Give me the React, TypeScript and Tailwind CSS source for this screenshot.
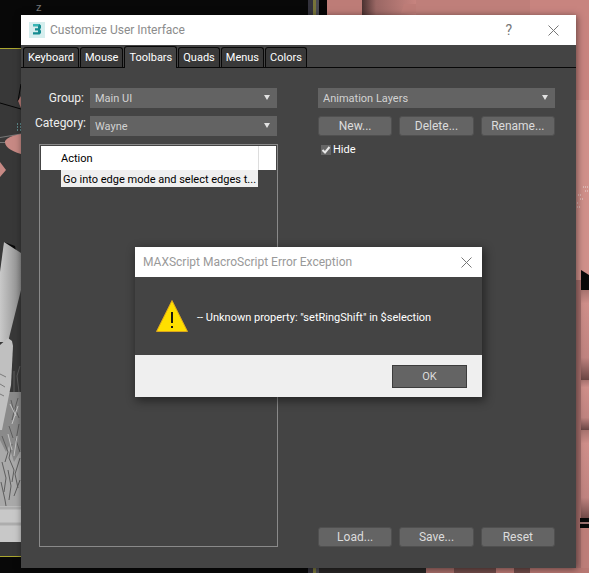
import type { ButtonHTMLAttributes } from "react";
import { useState } from "react";

const TABS = ["Keyboard", "Mouse", "Toolbars", "Quads", "Menus", "Colors"];

function Viewport() {
  return (
    <svg
      className="absolute inset-0 h-full w-full"
      viewBox="0 0 589 573"
      preserveAspectRatio="none"
      aria-hidden="true"
    >
      <defs>
        <linearGradient id="limb" x1="0" x2="1">
          <stop offset="0" stopColor="#c9c9c9" />
          <stop offset="1" stopColor="#8b8b8b" />
        </linearGradient>
        <linearGradient id="skinTop" x1="0" x2="1">
          <stop offset="0" stopColor="#4a3130" />
          <stop offset="0.25" stopColor="#9a6764" />
          <stop offset="1" stopColor="#c98580" />
        </linearGradient>
        <linearGradient id="skinFold" x1="0" y1="0" x2="0" y2="1">
          <stop offset="0" stopColor="#a8736f" />
          <stop offset="0.15" stopColor="#cf8f8a" />
          <stop offset="0.75" stopColor="#c08480" />
          <stop offset="1" stopColor="#6b4644" />
        </linearGradient>
      </defs>
      <rect width="589" height="573" fill="#080808" />

      {/* left viewport */}
      <rect y="49" width="308" height="508" fill="#383838" />
      <path d="M0 48.5H308M0 556.5H308" stroke="#aaa62f" />
      <path d="M0 103L21 109M21 84L18 101L21 105" stroke="#050505" fill="none" />
      <path d="M18 101L21 96V108Z" fill="#b67a76" />
      <path d="M17 124h1M20 124h1M17 127h1M20 127h1M17 130h1M20 130h1" stroke="#7fd4d8" />
      <path d="M0 137.5L21 134M0 142.5H6" stroke="#777" />
      <path d="M21 134Q8 136 5 141Q4 149 21 154Z" fill="#c78984" />
      <path d="M0 162L6 170L0 177Z" fill="#c78984" />
      <path d="M4 242L15 246L16 251L21 254V260L4 248Z" fill="#080808" />
      <path d="M4 242L21 253V290L8 342H0V272Z" fill="url(#limb)" />
      <path d="M0 392H21V508H0Z" fill="#8a8a8a" />
      <path d="M0 440L6 452L9 446L14 462L21 450V508H0Z" fill="#a9a9a9" />
      <path
        d="M14 392V371M19 392L17 376L20 366M11 400L14 412L12 420M18 398L15 408L19 418M9 426L13 438M19 424L16 440L20 452M2 436L8 452L5 462M12 444L9 458L14 470L12 482M20 458L15 474L18 488M2 462L6 478L4 492M8 470L11 486L9 500M1 482L5 500L6 506M20 480L14 496"
        stroke="#5e5e5e"
        fill="none"
      />
      <path d="M10 404L16 416M18 406L12 424M8 434L12 450M17 436L14 456" stroke="#c4c4c4" fill="none" />
      <path d="M0 345L8 338L12 341L13 346L11 385L2 430H0Z" fill="#c0c0c0" />
      <path d="M0 374l6 3M0 384l5 3M0 394l4 2" stroke="#7b7b7b" />
      <rect y="506" width="21" height="36" fill="#c8c8c8" />
      <path d="M0 508H21M0 524H21" stroke="#adadad" strokeWidth="3" />

      {/* right viewport */}
      <rect x="308" width="5" height="573" fill="#33323c" />
      <path d="M314.5 0V573" stroke="#77743a" strokeWidth="3" />
      <rect x="316" width="3" height="573" fill="#4a4a52" />
      <path d="M319 3L321 0H328V15H319Z" fill="#050505" />
      <rect x="327" width="35" height="15" fill="#bd7c77" />
      <rect x="362" width="56" height="15" fill="url(#skinTop)" />
      <path d="M401 13L404 4H416V13Z" fill="#bd7c77" />
      <rect x="416" width="173" height="15" fill="#bf7f7a" />
      <rect x="530" width="59" height="100" fill="#c8847f" />
      <rect x="576" y="100" width="13" height="180" fill="#d0908a" />
      <path d="M577 203h2M580 199h3M578 195h4M585 191h4M583 187h6M577 207h4" stroke="#ead9d7" strokeDasharray="1 1" />
      <path d="M581 270L589 275V287L581 283Z" fill="#080808" />
      <rect x="581" y="290" width="8" height="90" fill="url(#skinFold)" />
      <rect x="581" y="380" width="8" height="50" fill="url(#skinFold)" />
      <rect x="581" y="430" width="8" height="90" fill="url(#skinFold)" />
      <rect x="576" y="280" width="5" height="293" fill="#a66f6c" />
      <rect x="580" y="518" width="9" height="10" fill="#080808" />
      <path d="M580 523H589" stroke="#9c7371" strokeWidth="2" />
      <rect x="581" y="528" width="8" height="45" fill="#bd7e79" />
      <rect x="319" y="568" width="107" height="5" fill="#282625" />
      <rect x="426" y="568" width="28" height="5" fill="#a66d69" />
      <rect x="454" y="568" width="42" height="5" fill="#704b49" />
      <rect x="496" y="568" width="18" height="5" fill="#b87873" />
      <rect x="514" y="568" width="16" height="5" fill="#704b49" />
      <rect x="530" y="568" width="59" height="5" fill="#b87873" />
    </svg>
  );
}

function CloseIcon() {
  return (
    <svg className="h-[11px] w-[11px]" viewBox="0 0 11 11" aria-hidden="true">
      <path d="M0.5 0.5L10.5 10.5M10.5 0.5L0.5 10.5" stroke="#777" fill="none" />
    </svg>
  );
}

function Dropdown({ id, value, label }: { id: string; value: string; label?: string }) {
  return (
    <div className="relative h-5 w-full">
      <select
        id={id}
        aria-label={label}
        className="block h-5 w-full appearance-none bg-[#636363] pl-[5px] pr-6 pt-0.5 text-[#d2d2d2] outline-none"
      >
        <option>{value}</option>
      </select>
      <svg className="pointer-events-none absolute right-[7px] top-[7px] h-[5px] w-[6px]" viewBox="0 0 6 5" aria-hidden="true">
        <path d="M0 0H6L3 5Z" fill="#e2e2e2" />
      </svg>
    </div>
  );
}

function PushButton(props: ButtonHTMLAttributes<HTMLButtonElement>) {
  return (
    <button
      type="button"
      className="h-5 flex-1 rounded-[3px] border border-[#505050] bg-[#646464] text-[12px] leading-4 text-[#dcdcdc] hover:bg-[#707070]"
      {...props}
    />
  );
}

function ErrorDialog() {
  return (
    <div
      role="dialog"
      aria-labelledby="error-title"
      className="absolute left-[114px] top-[232px] w-[347px] bg-[#444] shadow-[2px_3px_9px_1px_rgba(0,0,0,0.45)]"
    >
      <div className="flex h-[30px] items-center justify-between bg-white pl-2 pr-[10px]">
        <h2 id="error-title" className="text-[12px] text-[#999]">
          MAXScript MacroScript Error Exception
        </h2>
        <button type="button" aria-label="Close error">
          <CloseIcon />
        </button>
      </div>
      <div className="flex h-[78px] items-center gap-[9px] pl-[21px] text-white">
        <svg className="h-8 w-8" viewBox="0 0 32 32" aria-hidden="true">
          <path d="M16 0.5L31.5 31.5H0.5Z" fill="#ffdf00" stroke="#dba51c" />
          <path d="M15 12H17V23H15ZM15 26H17V28H15Z" fill="#1c1a10" />
        </svg>
        <p className="pt-1">-- Unknown property: "setRingShift" in $selection</p>
      </div>
      <div className="flex h-[42px] items-center justify-end bg-[#efefef] pr-[15px]">
        <button
          type="button"
          className="h-[23px] w-[75px] border border-[#3c3c3c] bg-[#646464] pt-0.5 text-[#dcdcdc]"
        >
          OK
        </button>
      </div>
    </div>
  );
}

export default function App() {
  const [activeTab, setActiveTab] = useState("Toolbars");
  const [hidden, setHidden] = useState(true);

  return (
    <div className="relative flex min-h-screen overflow-hidden bg-[#080808] pb-[5px] pl-[21px] pr-[13px] pt-[15px] font-['Roboto','Noto_Sans',sans-serif] text-[11px] leading-[14px] text-[#eee]">
      <Viewport />
      <span className="absolute left-9 top-px text-[#777]">z</span>

      <main className="relative flex flex-1 flex-col bg-[#444] shadow-[1px_1px_7px_rgba(0,0,0,0.5)]">
        {/* Title bar */}
        <header className="flex h-[30px] items-center bg-white pl-2 pr-[17px]">
          <svg className="h-4 w-4" viewBox="0 0 16 16" aria-hidden="true">
            <rect width="16" height="16" fill="#d6eeee" />
            <path d="M4 2H10.5L12 3.5V6L11 7.3L12 8.8V11L10.5 12.5H4V10.3H9V8.5H6V6.3H9V4.3H4Z" fill="#158c91" />
            <path d="M4 2H10.5L9 4.3H4Z" fill="#37b6b5" />
          </svg>
          <h1 className="ml-[5px] flex-1 text-[12px] text-[#8c8c8c]">
            Customize User Interface
          </h1>
          <button type="button" className="mr-9 text-[14px] text-[#777]" aria-label="Help">
            ?
          </button>
          <button type="button" aria-label="Close">
            <CloseIcon />
          </button>
        </header>

        {/* Tabs */}
        <div role="tablist" className="flex h-[23px] items-end gap-px border-b border-[#080808] pl-0.5 text-[11px] text-white">
          {TABS.map((tab) => (
            <button
              key={tab}
              type="button"
              role="tab"
              aria-selected={tab === activeTab}
              onClick={() => setActiveTab(tab)}
              className={
                tab === activeTab
                  ? "-mb-px h-[22px] rounded-t-[3px] border border-b-0 border-[#080808] bg-[#444] px-1"
                  : "h-5 rounded-t-[3px] border border-b-0 border-[#080808] bg-[#393939] px-1"
              }
            >
              {tab}
            </button>
          ))}
        </div>

        <div className="grid flex-1 grid-cols-[243fr_237fr] gap-x-10 pb-[21px] pl-[14px] pr-[21px] pt-5">
          {/* Actions */}
          <section className="flex flex-col">
            <div className="mr-px grid grid-cols-[49px_1fr] gap-x-[6px] gap-y-2">
              <label htmlFor="group" className="self-center text-right text-[12px]">Group:</label>
              <Dropdown id="group" value="Main UI" />
              <label htmlFor="category" className="text-right text-[12px]">Category:</label>
              <Dropdown id="category" value="Wayne" />
            </div>
            <div className="ml-1 mt-2 flex-1 border border-[#8a8a8a] p-px">
              <table className="w-full table-fixed border-collapse text-left text-black">
                <colgroup>
                  <col className="w-5" />
                  <col />
                  <col className="w-[18px]" />
                </colgroup>
                <thead>
                  <tr className="h-6 bg-white">
                    <th />
                    <th className="border-r border-[#ddd] pt-0.5 font-normal">Action</th>
                    <th />
                  </tr>
                </thead>
                <tbody>
                  <tr className="h-[17px]">
                    <td />
                    <td className="whitespace-nowrap bg-[#efefef] pl-0.5 pt-0.5">Go into edge mode and select edges t...</td>
                    <td />
                  </tr>
                </tbody>
              </table>
            </div>
          </section>

          {/* Toolbar settings */}
          <section className="flex flex-col">
            <Dropdown id="toolbar" value="Animation Layers" label="Toolbar" />
            <div className="mt-2 flex gap-[7px]">
              <PushButton>New...</PushButton>
              <PushButton>Delete...</PushButton>
              <PushButton>Rename...</PushButton>
            </div>
            <label className="mt-[7px] flex items-center gap-[2px] self-start pl-[3px] text-white">
              <span className="relative h-[10px] w-[10px]">
                <input
                  type="checkbox"
                  checked={hidden}
                  onChange={(e) => setHidden(e.target.checked)}
                  className="block h-[10px] w-[10px] appearance-none bg-[#666]"
                />
                {hidden && (
                  <svg className="pointer-events-none absolute inset-0" viewBox="0 0 10 10" aria-hidden="true">
                    <path d="M1.5 5L4 7.5L8.5 2" stroke="#e8e8e8" strokeWidth="2" fill="none" />
                  </svg>
                )}
              </span>
              Hide
            </label>
            <div className="mt-auto flex gap-[7px]">
              <PushButton>Load...</PushButton>
              <PushButton>Save...</PushButton>
              <PushButton>Reset</PushButton>
            </div>
          </section>
        </div>

        <ErrorDialog />
      </main>
    </div>
  );
}
